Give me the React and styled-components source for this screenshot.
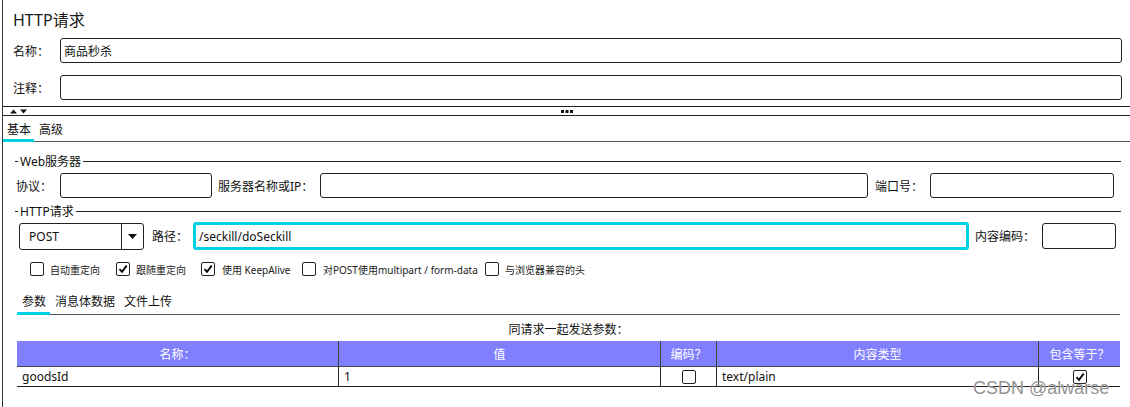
import React from 'react';
import styled, { createGlobalStyle } from 'styled-components';

const GlobalStyle = createGlobalStyle`
  html, body {
    margin: 0;
    padding: 0;
    background: #fff;
    overflow: hidden;
  }
  body {
    font-family: "Noto Sans", "Noto Sans CJK SC", sans-serif;
    color: #111;
  }
`;

const CYAN = '#00d2e6';

const Frame = styled.div`
  position: relative;
  margin-left: 2px;
  width: 1127px;
  height: 407px;
  border-left: 1px solid #333;
  display: flex;
  flex-direction: column;
`;

const Title = styled.div`
  height: 38px;
  padding-left: 10px;
  display: flex;
  align-items: center;
  font-size: 16px;
  color: #1a1a1a;
`;

const Row = styled.div`
  display: flex;
  align-items: center;
  height: ${p => p.$h || 25}px;
  margin-top: ${p => p.$mt || 0}px;
  padding-left: ${p => p.$pl || 0}px;
  padding-right: ${p => p.$pr || 0}px;
  font-size: 12px;
`;

const Label = styled.span`
  flex: none;
  width: ${p => p.$w}px;
  margin-left: ${p => p.$ml || 0}px;
  white-space: nowrap;
  font-size: 12px;
`;

const Input = styled.div`
  box-sizing: border-box;
  flex: ${p => (p.$w ? 'none' : 1)};
  width: ${p => (p.$w ? `${p.$w}px` : 'auto')};
  height: ${p => p.$h || 25}px;
  border: ${p => (p.$focus ? `3px solid ${CYAN}` : '1px solid #222')};
  border-radius: 3px;
  display: flex;
  align-items: center;
  padding-left: ${p => (p.$focus ? 3 : 3)}px;
  font-size: 12px;
  white-space: nowrap;
`;

const Splitter = styled.div`
  margin-top: 6px;
  height: 8px;
  border-top: 1px solid #222;
  border-bottom: 1px solid #222;
  display: grid;
  grid-template-columns: 1fr auto 1fr;
  align-items: center;
`;

const Arrows = styled.div`
  display: flex;
  align-items: center;
  padding-left: 7px;
`;

const TabBar = styled.div`
  display: flex;
  height: ${p => p.$h}px;
  margin-top: ${p => p.$mt || 0}px;
  margin-left: ${p => p.$ml || 0}px;
  margin-right: ${p => p.$mr || 0}px;
  border-bottom: 1px solid #555;
`;

const Tab = styled.div`
  display: flex;
  align-items: center;
  padding: ${p => p.$pt || 0}px ${p => p.$pr || 5}px 0 ${p => p.$pl || 5}px;
  margin-bottom: -1px;
  border-bottom: 3px solid ${p => (p.$active ? CYAN : 'transparent')};
  font-size: 12px;
  white-space: nowrap;
`;

const Legend = styled.div`
  display: flex;
  align-items: center;
  height: 16px;
  margin-top: ${p => p.$mt}px;
  margin-left: 12px;
  margin-right: 9px;
  font-size: 12px;

  &::before {
    content: '';
    width: 3px;
    border-top: 1px solid #222;
  }
  &::after {
    content: '';
    flex: 1;
    border-top: 1px solid #222;
  }
  span {
    padding: 0 2px;
  }
`;

const Select = styled.div`
  box-sizing: border-box;
  width: 125px;
  height: 27px;
  flex: none;
  border: 1px solid #222;
  border-radius: 3px;
  display: flex;
  font-size: 12px;
`;

const SelectValue = styled.div`
  flex: 1;
  display: flex;
  align-items: center;
  padding-left: 9px;
`;

const SelectButton = styled.div`
  width: 21px;
  border-left: 1px solid #222;
  display: flex;
  align-items: center;
  justify-content: center;
`;

const Checks = styled.div`
  display: flex;
  align-items: center;
  height: 14px;
  margin-top: 12px;
  padding-left: 27px;
`;

const CheckItem = styled.div`
  display: flex;
  align-items: center;
  flex: none;
  width: ${p => (p.$w ? `${p.$w}px` : 'auto')};
  font-size: 10px;
  color: #222;
  white-space: nowrap;
`;

const Box = styled.span`
  box-sizing: border-box;
  width: 14px;
  height: 14px;
  flex: none;
  border: 1px solid #222;
  border-radius: 2px;
  background: #fff;
  display: inline-flex;
  align-items: center;
  justify-content: center;
  margin-right: ${p => p.$mr || 0}px;
`;

const Caption = styled.div`
  margin-top: 7px;
  height: 16px;
  margin-left: 14px;
  width: 1103px;
  text-align: center;
  font-size: 12px;
  line-height: 16px;
`;

const Table = styled.div`
  margin-top: 3px;
  margin-left: 14px;
  width: 1103px;
  display: grid;
  grid-template-columns: 321px 322px 56px 322px 82px;
`;

const Head = styled.div`
  height: 25px;
  background: #8080ff;
  color: #fff;
  font-size: 12px;
  display: flex;
  align-items: center;
  justify-content: center;
  border-bottom: 1px solid #444;
  border-left: ${p => (p.$first ? 'none' : '1px solid #444')};
`;

const Cell = styled.div`
  height: 19px;
  font-size: 12px;
  display: flex;
  align-items: center;
  justify-content: ${p => (p.$center ? 'center' : 'flex-start')};
  padding-left: ${p => (p.$center ? 0 : 5)}px;
  border-bottom: 1px solid #222;
  border-left: ${p => (p.$first ? 'none' : '1px solid #222')};
`;

const Watermark = styled.div`
  position: absolute;
  left: 970px;
  top: 378px;
  font-family: "Liberation Sans", Arial, sans-serif;
  font-size: 18px;
  color: rgba(110, 110, 110, 0.75);
  text-shadow: 0 0 1px #fff;
  white-space: nowrap;
`;

const Check = ({ on, mr }) => (
  <Box $mr={mr}>
    {on && (
      <svg width="10" height="10" viewBox="0 0 10 10">
        <path d="M1.5 5.2 L4 7.8 L8.7 1.6" fill="none" stroke="#000" strokeWidth="1.8" />
      </svg>
    )}
  </Box>
);

const App = () => (
  <>
    <GlobalStyle />
    <Frame>
      <Title>HTTP请求</Title>

      <Row $pl={10} $pr={8}>
        <Label $w={47}>名称：</Label>
        <Input>商品秒杀</Input>
      </Row>
      <Row $mt={12} $pl={10} $pr={8}>
        <Label $w={47}>注释：</Label>
        <Input />
      </Row>

      <Splitter>
        <Arrows>
          <svg width="18" height="5" viewBox="0 0 18 5">
            <path d="M0 4.5 L3.5 0.5 L7 4.5 Z" fill="#111" />
            <path d="M10 0.5 L17 0.5 L13.5 4.5 Z" fill="#111" />
          </svg>
        </Arrows>
        <svg width="12" height="3" viewBox="0 0 12 3">
          <rect x="0" y="0" width="3" height="3" fill="#111" />
          <rect x="4.5" y="0" width="3" height="3" fill="#111" />
          <rect x="9" y="0" width="3" height="3" fill="#111" />
        </svg>
        <span />
      </Splitter>

      <TabBar $h={25}>
        <Tab $active $pl={4} $pr={3} $pt={3}>基本</Tab>
        <Tab $pl={5} $pt={3}>高级</Tab>
      </TabBar>

      <Legend $mt={11}><span>Web服务器</span></Legend>
      <Row $mt={4} $pl={13}>
        <Label $w={44}>协议：</Label>
        <Input $w={152} />
        <Label $w={102} $ml={6}>服务器名称或IP：</Label>
        <Input $w={548} />
        <Label $w={55} $ml={7}>端口号：</Label>
        <Input $w={184} />
      </Row>

      <Legend $mt={5}><span>HTTP请求</span></Legend>
      <Row $h={28} $mt={3} $pl={16}>
        <Select>
          <SelectValue>POST</SelectValue>
          <SelectButton>
            <svg width="9" height="5" viewBox="0 0 9 5">
              <path d="M0 0 L9 0 L4.5 5 Z" fill="#111" />
            </svg>
          </SelectButton>
        </Select>
        <Label $w={41} $ml={8}>路径：</Label>
        <Input $w={776} $h={28} $focus>/seckill/doSeckill</Input>
        <Label $w={67} $ml={6}>内容编码：</Label>
        <Input $w={74} $h={26} />
      </Row>

      <Checks>
        <CheckItem $w={86}><Check mr={6} />自动重定向</CheckItem>
        <CheckItem $w={85}><Check on mr={6} />跟随重定向</CheckItem>
        <CheckItem $w={101}><Check on mr={7} />使用 KeepAlive</CheckItem>
        <CheckItem $w={183}><Check mr={7} />对POST使用multipart / form-data</CheckItem>
        <CheckItem><Check mr={6} />与浏览器兼容的头</CheckItem>
      </Checks>

      <TabBar $h={24} $mt={14} $ml={14} $mr={10}>
        <Tab $active $pl={5} $pr={4}>参数</Tab>
        <Tab $pl={5} $pr={4}>消息体数据</Tab>
        <Tab $pl={5}>文件上传</Tab>
      </TabBar>

      <Caption>同请求一起发送参数：</Caption>
      <Table>
        <Head $first>名称：</Head>
        <Head>值</Head>
        <Head>编码？</Head>
        <Head>内容类型</Head>
        <Head>包含等于？</Head>
        <Cell $first>goodsId</Cell>
        <Cell>1</Cell>
        <Cell $center><Check /></Cell>
        <Cell>text/plain</Cell>
        <Cell $center><Check on /></Cell>
      </Table>

      <Watermark>CSDN @alwarse</Watermark>
    </Frame>
  </>
);

export default App;
